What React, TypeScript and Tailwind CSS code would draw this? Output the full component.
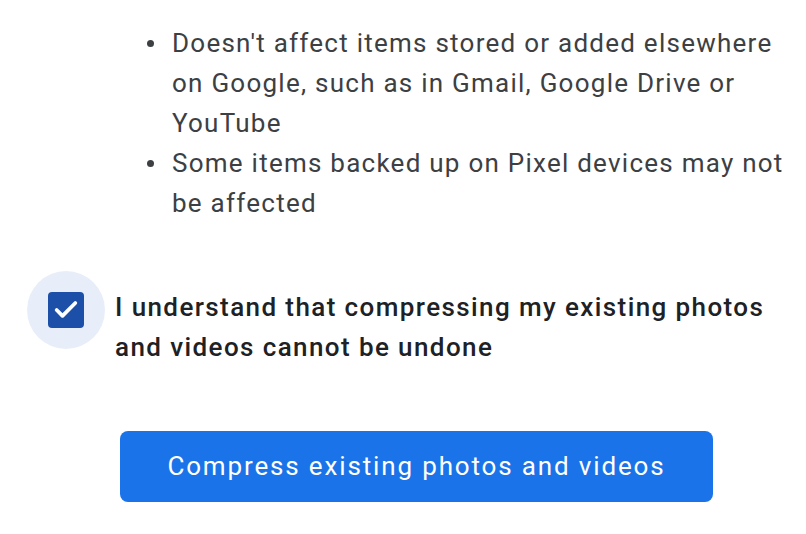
import { Check } from "lucide-react";

export default function App() {
  return (
    <div className="w-[806px] h-[534px] bg-white overflow-hidden font-['Roboto',sans-serif]">
      {/* Notes */}
      <ul className="pt-[23px] pl-[147px] pr-[4px] text-[26px] leading-[40px] text-[#3c4043] tracking-[1.25px]">
        <li className="flex">
          <span className="w-[25px] h-[40px] shrink-0 flex items-center">
            <span className="w-[7px] h-[7px] rounded-full bg-[#3c4043]" />
          </span>
          <span>Doesn't affect items stored or added elsewhere on Google, such as in Gmail, Google Drive or YouTube</span>
        </li>
        <li className="flex">
          <span className="w-[25px] h-[40px] shrink-0 flex items-center">
            <span className="w-[7px] h-[7px] rounded-full bg-[#3c4043]" />
          </span>
          <span>Some items backed up on Pixel devices may not be affected</span>
        </li>
      </ul>

      {/* Confirm checkbox */}
      <div className="mt-[64px] pl-[27px] pr-[4px] flex items-start gap-[10px]">
        <div className="w-[78px] h-[78px] shrink-0 rounded-full bg-[#e8eef9] flex items-center justify-center -mt-[16px]">
          <div className="w-[36px] h-[36px] rounded-[4px] bg-[#1c4fa8] flex items-center justify-center">
            <Check className="w-[28px] h-[28px] text-white" strokeWidth={3.2} />
          </div>
        </div>
        <p className="text-[26px] leading-[40px] font-medium text-[#202124] tracking-[1.4px]">
          I understand that compressing my existing photos and videos cannot be undone
        </p>
      </div>

      {/* Action */}
      <div className="mt-[64px] pl-[120px]">
        <button className="w-[593px] h-[71px] rounded-[8px] bg-[#1a73e8] text-white text-[26px] tracking-[1.85px]">
          Compress existing photos and videos
        </button>
      </div>
    </div>
  );
}
